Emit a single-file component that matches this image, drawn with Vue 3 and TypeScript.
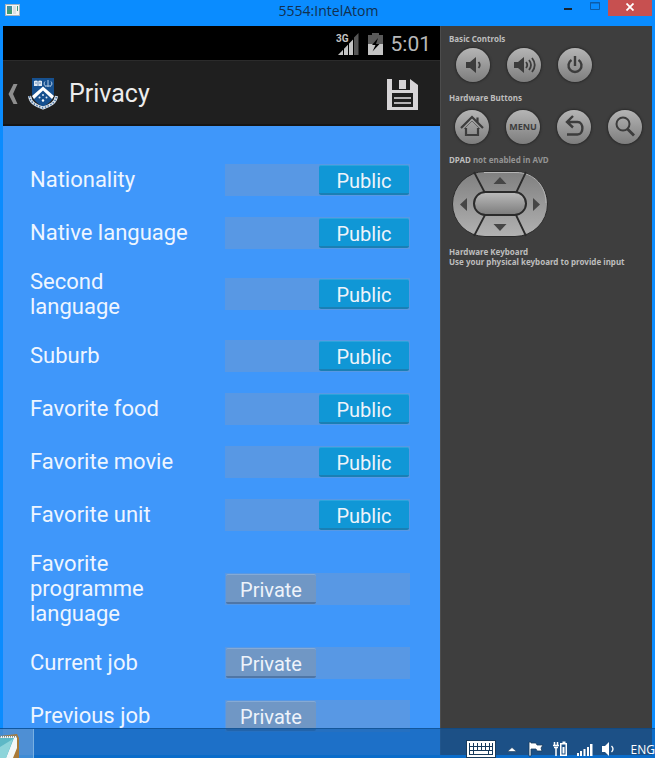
<script setup lang="ts">
import { reactive } from 'vue'

interface Setting {
  id: string
  label: string
  isPublic: boolean
}

const settings = reactive<Setting[]>([
  { id: 'nationality', label: 'Nationality', isPublic: true },
  { id: 'native-language', label: 'Native language', isPublic: true },
  { id: 'second-language', label: 'Second\nlanguage', isPublic: true },
  { id: 'suburb', label: 'Suburb', isPublic: true },
  { id: 'favorite-food', label: 'Favorite food', isPublic: true },
  { id: 'favorite-movie', label: 'Favorite movie', isPublic: true },
  { id: 'favorite-unit', label: 'Favorite unit', isPublic: true },
  { id: 'favorite-programme-language', label: 'Favorite\nprogramme\nlanguage', isPublic: false },
  { id: 'current-job', label: 'Current job', isPublic: false },
  { id: 'previous-job', label: 'Previous job', isPublic: false },
])
</script>

<template>
  <div class="desktop">
    <header class="titlebar">
      <svg class="app-icon" width="16" height="13" viewBox="0 0 16 13">
        <rect x="0.5" y="0.5" width="14" height="11" fill="#f4f4f4" stroke="#a9b4bd" />
        <rect x="2" y="2" width="5" height="8" fill="#3f8fa0" />
        <rect x="2" y="6" width="5" height="4" fill="#3f9a72" />
        <rect x="8" y="2" width="3" height="8" fill="#dcdfe2" />
        <rect x="12" y="2" width="1" height="5" fill="#3d9a78" />
      </svg>
      <span class="window-title">5554:IntelAtom</span>
      <div class="window-buttons">
        <button type="button" class="win-btn" aria-label="Minimize">
          <svg width="26" height="16" viewBox="0 0 26 16"><rect x="0" y="8" width="8" height="2" fill="#16222e" /></svg>
        </button>
        <button type="button" class="win-btn" aria-label="Maximize">
          <svg width="18" height="16" viewBox="0 0 18 16"><path d="M0.5 2.5h9v7h-9z M0 3h10" fill="none" stroke="#0c5ca8" /></svg>
        </button>
        <button type="button" class="win-btn close" aria-label="Close">
          <svg width="8" height="8" viewBox="0 0 8 8"><path d="M0.5 0.5 7.5 7.5M7.5 0.5 0.5 7.5" stroke="#fff" stroke-width="1.8" /></svg>
        </button>
      </div>
    </header>

    <main class="window-body">
      <section class="phone">
        <div class="statusbar">
          <svg class="signal" width="24" height="24" viewBox="0 0 24 24" aria-label="3G signal">
            <path d="M22.500 1v22h-5V6z" fill="#565656" />
            <path d="M2 23 17 7.500V23z" fill="#c4c4c4" />
            <path d="M7.500 12v11M12.500 8v15M17.500 5v18" stroke="#000" stroke-width="1" />
            <text x="0" y="10" class="net-text">3G</text>
          </svg>
          <svg class="battery" width="15" height="22" viewBox="0 0 15 22" aria-label="Battery charging">
            <path d="M4 0h7v2h4v9H0V2h4z" fill="#5a5a5a" />
            <path d="M0 11h15v11H0z" fill="#c4c4c4" />
            <path d="M10 5 4 12h3.500L4.500 18.500 11.500 11H8z" fill="#000" />
          </svg>
          <span class="clock">5:01</span>
        </div>

        <div class="actionbar">
          <button type="button" class="icon-btn" aria-label="Back">
            <svg width="10" height="20" viewBox="0 0 10 20"><path d="M5.500 0H9.500L5 10l4.500 10H5.500L0.500 10z" fill="#8e8e8e" /></svg>
          </button>
          <svg class="crest" width="30" height="32" viewBox="0 0 30 32">
            <path d="M4 0h22v15c0 7-6 11-11 14C10 26 4 22 4 15z" fill="#16508f" />
            <path d="M6 3c1.500-.8 2.500-.8 4 0 1.500-.8 2.500-.8 4 0v5H6z" fill="#dfe8f2" />
            <path d="M10 3v5M7 5h2M11 5h2" stroke="#6b8fb8" />
            <path d="M20 2v7M17 3.500c-1.500 1.500-1 4 .5 4.500M23 3.500c1.500 1.500 1 4-.5 4.500M17 8h6" fill="none" stroke="#b4cbe4" />
            <path d="M15 8.500 26 18l-2 3-9-8.500L6 21l-2-3z" fill="#fff" />
            <circle cx="15" cy="17" r="1" fill="#dbe7f5" />
            <circle cx="11.500" cy="19.500" r="1" fill="#dbe7f5" />
            <circle cx="18.500" cy="19.500" r="1" fill="#dbe7f5" />
            <circle cx="15" cy="22.500" r="1.200" fill="#fff" />
            <path d="M1.500 18c1 7 6 9.500 13.500 12 7.500-2.500 12.500-5 13.500-12" fill="none" stroke="#dde6ef" stroke-width="3" />
            <path d="M1.500 18c1 7 6 9.500 13.500 12 7.500-2.500 12.500-5 13.500-12" fill="none" stroke="#47709f" stroke-width="1.500" stroke-dasharray="1.500 1.500" />
          </svg>
          <h1>Privacy</h1>
          <button type="button" class="icon-btn save" aria-label="Save">
            <svg width="31" height="31" viewBox="0 0 31 31">
              <path fill-rule="evenodd" fill="#d6d4d6" d="M0 0h5v11h18V0l8 6v25H0zM5 14v14h21V14z" />
              <path d="M12 1h7v9h-7z" fill="#d6d4d6" />
              <path d="M7 18h17v2H7zM7 23h17v2H7z" fill="#b4b2b4" />
            </svg>
          </button>
        </div>

        <div class="settings">
          <label v-for="item in settings" :key="item.id" class="row" :for="item.id">
            <span class="name">{{ item.label }}</span>
            <span class="switch" :class="{ on: item.isPublic }">
              <input :id="item.id" v-model="item.isPublic" type="checkbox" role="switch" />
              <span class="thumb">{{ item.isPublic ? 'Public' : 'Private' }}</span>
            </span>
          </label>
        </div>
      </section>

      <aside class="controls">
        <h2>Basic Controls</h2>
        <div class="keys">
          <button type="button" class="key" aria-label="Volume down">
            <svg width="34" height="34" viewBox="0 0 34 34">
              <path d="M10 14h4l6-5v16l-6-5h-4z" fill="#3c3c3c" />
              <path d="M22.500 14q2.500 3 0 6" fill="none" stroke="#3c3c3c" stroke-width="1.800" />
            </svg>
          </button>
          <button type="button" class="key" aria-label="Volume up">
            <svg width="34" height="34" viewBox="0 0 34 34">
              <path d="M7 14h4l6-5v16l-6-5H7z" fill="#3c3c3c" />
              <path d="M19 14q2.500 3 0 6M22 12q4 5 0 10M25 10q5.500 7 0 14" fill="none" stroke="#3c3c3c" stroke-width="1.800" />
            </svg>
          </button>
          <button type="button" class="key" aria-label="Power">
            <svg width="34" height="34" viewBox="0 0 34 34">
              <path d="M13.500 12a6.500 6.500 0 1 0 7 0M17 8v10" fill="none" stroke="#3c3c3c" stroke-width="2.400" />
            </svg>
          </button>
        </div>

        <h2 class="next">Hardware Buttons</h2>
        <div class="keys hardware">
          <button type="button" class="key" aria-label="Home">
            <svg width="34" height="34" viewBox="0 0 34 34">
              <path d="M6 18 17 7l11 11M11 18v7h12v-7M22.500 12.500V7.500" fill="none" stroke="#3c3c3c" stroke-width="2.200" />
              <path d="m9 19 8-8 8 8" fill="none" stroke="#3c3c3c" stroke-width="0.600" />
            </svg>
          </button>
          <button type="button" class="key">MENU</button>
          <button type="button" class="key" aria-label="Back key">
            <svg width="34" height="34" viewBox="0 0 34 34">
              <path d="m16 6-6 6 6 5.500M10 12h10.500c6.500 0 6.500 12.500 0 12.500H10" fill="none" stroke="#3c3c3c" stroke-width="2.400" />
            </svg>
          </button>
          <button type="button" class="key" aria-label="Search">
            <svg width="34" height="34" viewBox="0 0 34 34">
              <circle cx="15" cy="14" r="6.500" fill="none" stroke="#3c3c3c" stroke-width="2" />
              <path d="m19.500 19 6.500 6.500" stroke="#3c3c3c" stroke-width="2.800" />
            </svg>
          </button>
        </div>

        <h2 class="next">DPAD <span>not enabled in AVD</span></h2>
        <svg class="dpad" width="98" height="68" viewBox="0 0 98 68">
          <defs>
            <linearGradient id="pad" x1="0" y1="0" x2="0" y2="1">
              <stop offset="0" stop-color="#7f7f7f" />
              <stop offset="1" stop-color="#b2b2b2" />
            </linearGradient>
            <linearGradient id="hub" x1="0" y1="0" x2="0" y2="1">
              <stop offset="0" stop-color="#bcbcbc" />
              <stop offset="1" stop-color="#7b7b7b" />
            </linearGradient>
          </defs>
          <rect x="1.500" y="1.500" width="95" height="65" rx="32.500" fill="url(#pad)" stroke="#2b2b2b" />
          <path d="M33 2.500h32C84 2.500 95 17 95 33" fill="none" stroke="#b5b5b5" />
          <path d="M23 2 34 23M75 2 65 23M34 45 23 66M65 45 75 66" stroke="#2b2b2b" stroke-width="1.800" />
          <rect x="23" y="22" width="52" height="23" rx="11.500" fill="url(#hub)" stroke="#2b2b2b" stroke-width="2" />
          <path d="m42.500 14 6.500-7 6.500 7zM42.500 54h13L49 61zM16 28v13l-7-6.500zM82 28v13l7-6.500z" fill="#464646" />
        </svg>

        <h2 class="keyboard">Hardware Keyboard</h2>
        <p>Use your physical keyboard to provide input</p>
      </aside>
    </main>

    <footer class="taskbar">
      <button type="button" class="task" aria-label="Notepad">
        <svg width="22" height="24" viewBox="0 0 22 24">
          <path d="M0 2 17 0l2 4v20H0z" fill="#a87a38" />
          <path d="M0 2h17v12l-4 10H0z" fill="#f3f8f9" />
          <path d="M0 4h14L6 24H0z" fill="#5db8c6" />
          <path d="M0 13 13 5 6 24H0z" fill="#8dd4da" />
          <path d="M0 2.500h17" stroke="#7d8a8c" stroke-width="2" stroke-dasharray="1 1" />
        </svg>
      </button>
      <div class="tray">
        <button type="button" aria-label="Touch keyboard">
          <svg width="30" height="18" viewBox="0 0 30 18">
            <rect x="0.500" y="0.500" width="29" height="17" fill="#fff" stroke="#173a5c" />
            <rect x="3" y="3" width="24" height="12" fill="#173a5c" />
            <path d="M4 4.500h22M4 8.500h22" stroke="#fff" stroke-width="3" stroke-dasharray="3 1" />
            <path d="M4 12.500h3M8 12.500h14M23 12.500h3" stroke="#fff" stroke-width="3" />
          </svg>
        </button>
        <button type="button" aria-label="Show hidden icons">
          <svg width="14" height="18" viewBox="0 0 14 18"><path d="m2.500 11.500 4.500-4 4.500 4z" fill="#fff" stroke="#173a5c" stroke-width="0.600" /></svg>
        </button>
        <button type="button" aria-label="Action center">
          <svg width="16" height="18" viewBox="0 0 16 18"><path d="M1 2h2v1h5l1 2h6l-2 3 1 3H9L8 9H3v7H1z" fill="#fff" stroke="#173a5c" stroke-width="0.800" /></svg>
        </button>
        <button type="button" aria-label="Power status">
          <svg width="15" height="18" viewBox="0 0 15 18">
            <path d="M1.500 2v4M4.500 2v4M0 5.500h6M1 7.500h4M3 7v9" stroke="#fff" stroke-width="1.500" />
            <path fill="#fff" fill-rule="evenodd" d="M8 3h1.500V1.500h3V3H14v13H7V3zM8.500 4.500v10h4v-10z" />
            <path d="M9.500 7h2v6.500h-2z" fill="#fff" />
          </svg>
        </button>
        <button type="button" aria-label="Network">
          <svg width="16" height="18" viewBox="0 0 16 18"><path d="M0 13h2v3H0zM3 11h2v5H3zM6.500 9h2v7h-2zM10 7h2v9h-2zM13 4h2.500v12H13z" fill="#fff" /></svg>
        </button>
        <button type="button" aria-label="Volume">
          <svg width="14" height="18" viewBox="0 0 14 18">
            <path d="M0 6h3l4-4v14l-4-4H0z" fill="#fff" />
            <path d="M9.500 6q3 3 0 6" fill="none" stroke="#fff" stroke-width="1.300" />
          </svg>
        </button>
        <button type="button" class="lang">ENG</button>
      </div>
    </footer>
  </div>
</template>

<style>
body {
  margin: 0;
  background: #0a8cff;
}
</style>

<style scoped>
.desktop {
  position: relative;
  display: flex;
  flex-direction: column;
  height: 100vh;
  overflow: hidden;
  background: #0a8cff;
  font-family: Roboto, 'Noto Sans', sans-serif;
}

button {
  padding: 0;
  border: 0;
  background: none;
  color: inherit;
  font: inherit;
}

svg {
  display: block;
}

.titlebar {
  display: grid;
  grid-template-columns: 1fr auto 1fr;
  align-items: start;
  flex: none;
  height: 26px;
  padding: 0 3px 0 5px;
  box-sizing: border-box;
}

.app-icon {
  margin-top: 4px;
}

.window-title {
  font-family: 'Open Sans', 'Noto Sans', sans-serif;
  font-size: 14px;
  line-height: 22px;
  color: #12304f;
}

.window-buttons {
  display: flex;
  justify-content: flex-end;
}

.win-btn.close {
  display: flex;
  align-items: center;
  justify-content: center;
  width: 44px;
  height: 16px;
  padding-bottom: 2px;
  background: #c75050;
}

.window-body {
  display: grid;
  grid-template-columns: minmax(0, 1fr) 212px;
  flex: 1;
  min-height: 0;
  padding: 0 3px 3px;
}

.phone {
  display: flex;
  flex-direction: column;
  min-height: 0;
  overflow: hidden;
  background: #3f97fa;
}

.statusbar {
  display: flex;
  flex: none;
  align-items: center;
  justify-content: flex-end;
  gap: 8px;
  height: 34px;
  padding: 2px 9px 0 0;
  box-sizing: border-box;
  background: #000;
}

.net-text {
  fill: #c4c4c4;
  font: 700 10px Roboto, sans-serif;
}

.clock {
  color: #b8b8b8;
  font-size: 21px;
  line-height: 32px;
}

.actionbar {
  display: flex;
  flex: none;
  align-items: center;
  height: 66px;
  padding: 3px 22px 0 5px;
  box-sizing: border-box;
  background: #1f1f1f;
  border-top: 1px solid #2b2b2b;
  border-bottom: 2px solid #151515;
}

.crest {
  margin: 0 11px 0 10px;
}

h1 {
  flex: 1;
  margin: 0;
  color: #ececec;
  font-size: 25px;
  font-weight: 400;
  line-height: 32px;
}

.settings {
  flex: 1;
  min-height: 0;
  overflow: hidden;
  padding: 27px 30px 0 27px;
}

.row {
  display: flex;
  align-items: center;
  justify-content: space-between;
  min-height: 53px;
  padding: 10px 0;
  box-sizing: border-box;
}

.name {
  color: #eef5ff;
  font-size: 22px;
  line-height: 25px;
  white-space: pre-line;
}

.switch {
  position: relative;
  display: flex;
  flex: none;
  width: 185px;
  height: 32px;
  margin: -4px 0;
  padding: 1px;
  box-sizing: border-box;
  background: #5898e4;
}

.switch.on {
  justify-content: flex-end;
}

.switch input {
  position: absolute;
  inset: 0;
  width: 100%;
  height: 100%;
  margin: 0;
  opacity: 0;
}

.thumb {
  width: 90px;
  height: 30px;
  border-radius: 2px;
  box-sizing: border-box;
  border-top: 1px solid #86aad4;
  border-bottom: 2px solid #4f76a6;
  background: #7097c5;
  color: #eef3fa;
  font-size: 20px;
  line-height: 30px;
  text-align: center;
}

.on .thumb {
  border-top-color: #2ca4dc;
  border-bottom-color: #1a7fb4;
  background: #1097d6;
}

.controls {
  padding: 8px 8px;
  border-left: 1px solid #4c4c4c;
  background: #3e3e3e;
  box-sizing: border-box;
  color: #bdbdbd;
  font-family: 'Noto Sans', sans-serif;
  font-size: 8px;
  font-weight: 700;
  line-height: 10px;
  white-space: nowrap;
}

.controls h2,
.controls p {
  margin: 0;
  font-size: inherit;
  font-weight: inherit;
}

.controls h2.next {
  margin-top: 11px;
}

.controls h2 span {
  color: #949494;
}

.keys {
  display: flex;
  gap: 17px;
  padding: 4px 0 0 7px;
}

.keys.hardware {
  padding: 7px 0 0 6px;
}

.key {
  flex: none;
  width: 34px;
  height: 34px;
  border-radius: 50%;
  background: linear-gradient(#b5b5b5, #7d7d7d);
  box-shadow: 0 0 2px 1px #2a2a2a;
  color: #3c3c3c;
  font-size: 9px;
  font-weight: 700;
}

.dpad {
  margin: 5px 0 0 2px;
}

.controls h2.keyboard {
  margin-top: 9px;
}

.taskbar {
  position: absolute;
  right: 0;
  bottom: 0;
  left: 0;
  display: flex;
  justify-content: space-between;
  height: 30px;
  box-sizing: border-box;
  border-top: 1px solid rgba(10, 70, 130, 0.6);
  background: rgba(11, 91, 173, 0.65);
}

.task {
  display: flex;
  align-items: flex-end;
  width: 34px;
  border-right: 1px solid #79b0e2;
  background: rgba(255, 255, 255, 0.22);
}

.tray {
  display: flex;
  align-items: center;
  gap: 9px;
  padding: 11px 0 0;
}

.lang {
  padding-left: 6px;
  color: #fff;
  font-family: 'Open Sans', 'Noto Sans', sans-serif;
  font-size: 12px;
}
</style>
